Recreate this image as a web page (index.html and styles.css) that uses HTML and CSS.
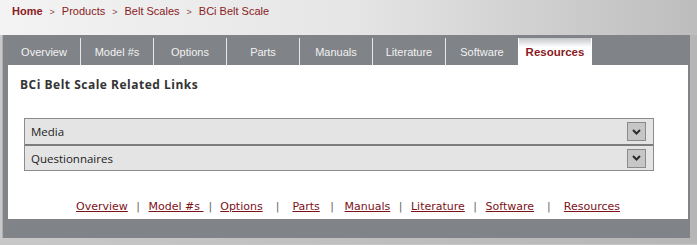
FILE: index.html
```html
<!DOCTYPE html>
<html lang="en">
<head>
<meta charset="UTF-8">
<meta name="viewport" content="width=device-width, initial-scale=1.0">
<title>BCi Belt Scale - Resources</title>
<link rel="stylesheet" href="styles.css">
</head>
<body>

<div class="header">
    <div class="breadcrumb">
        <a href="#" class="home">Home</a><span class="arrow">&gt;</span><a href="#">Products</a><span class="arrow">&gt;</span><a href="#">Belt Scales</a><span class="arrow">&gt;</span><a href="#">BCi Belt Scale</a>
    </div>
</div>

<div class="page">
    <div class="frame">
        <ul class="tabs">
            <li><a href="#">Overview</a></li>
            <li><a href="#">Model #s</a></li>
            <li><a href="#">Options</a></li>
            <li><a href="#">Parts</a></li>
            <li><a href="#">Manuals</a></li>
            <li><a href="#">Literature</a></li>
            <li><a href="#">Software</a></li>
            <li class="active"><a href="#">Resources</a></li>
        </ul>

        <div class="content">
            <h3 class="title">BCi Belt Scale Related Links</h3>

            <div class="accordion">
                <div class="acc-row">
                    <span>Media</span>
                    <button class="acc-btn"><svg width="9" height="6" viewBox="0 0 9 6"><polyline points="1,1 4.5,4.5 8,1" fill="none" stroke="#2b2b2b" stroke-width="2"/></svg></button>
                </div>
                <div class="acc-row second">
                    <span>Questionnaires</span>
                    <button class="acc-btn"><svg width="9" height="6" viewBox="0 0 9 6"><polyline points="1,1 4.5,4.5 8,1" fill="none" stroke="#2b2b2b" stroke-width="2"/></svg></button>
                </div>
            </div>

            <div class="footer-links">
                <a href="#">Overview</a><span class="sep">|</span><a href="#">Model #s&nbsp;</a><span class="sep narrow">|</span><a href="#">Options</a><span class="sep wide">|</span><a href="#">Parts</a><span class="sep mid">|</span><a href="#">Manuals</a><span class="sep">|</span><a href="#">Literature</a><span class="sep">|</span><a href="#">Software</a><span class="sep wide">|</span><a href="#">Resources</a>
            </div>
        </div>
    </div>
</div>

</body>
</html>
```

FILE: styles.css
```css
body {
    margin: 0;
    padding: 0;
    background-color: #c6c6c6;
    font-family: "Liberation Sans", Arial, sans-serif;
}
a {
    text-decoration: none;
}
.header {
    height: 35px;
    box-sizing: border-box;
    padding: 4px 0 0 12px;
    background: linear-gradient(to right, #f3f3f3 0%, #e6e6e6 50%, #bdbdbd 100%);
}
.breadcrumb {
    font-size: 11px;
    line-height: 14px;
}
.breadcrumb a {
    color: #8a1a22;
}
.breadcrumb .home {
    font-weight: bold;
}
.breadcrumb .arrow {
    font-size: 9px;
    color: #8a4a4e;
    margin: 0 7px;
}
.page {
    padding: 0 7px 6px 2px;
    background: linear-gradient(to right, #c8c8c8, #b6b6b6);
}
.frame {
    background-color: #808388;
    border-left: 1px solid #b0b0b0;
    padding: 3px 2px 19px 5px;
}
.tabs {
    list-style: none;
    margin: 0;
    padding: 0;
    display: flex;
    height: 27px;
}
.tabs li {
    width: 72px;
    border-left: 1px solid #e8e8e8;
    display: flex;
    align-items: center;
    justify-content: center;
    padding-top: 1px;
}
.tabs li:first-child {
    border-left: none;
}
.tabs li a {
    color: #f2f2f2;
    font-size: 11px;
}
.tabs li.active {
    background: linear-gradient(#c4c6c8 0px, #ffffff 9px);
    border-left: 1px solid #ffffff;
    border-right: 1px solid #ffffff;
}
.tabs li.active a {
    color: #8a1a22;
    font-weight: bold;
    font-size: 11.5px;
}
.content {
    background-color: #fff;
    padding: 13px 0 5px 0;
}
.title {
    margin: 0 0 0 12px;
    font-family: "Open Sans", sans-serif;
    font-size: 12px;
    letter-spacing: 0.5px;
    line-height: 14px;
    font-weight: bold;
    color: #333;
}
.accordion {
    margin: 26px 0 0 16px;
    width: 628px;
    border: 1px solid #8c8c8c;
    font-family: "Open Sans", sans-serif;
    font-size: 11.5px;
    color: #222;
}
.acc-row {
    height: 25px;
    background-color: #e4e4e4;
    display: flex;
    align-items: center;
    justify-content: space-between;
    padding: 0 7px 0 6px;
}
.acc-row.second {
    height: 24px;
    border-top: 2px solid #7c7c7c;
}
.acc-btn {
    width: 19px;
    height: 19px;
    padding: 0;
    background-color: #c6c6c6;
    border: 1px solid #8a8a8a;
    display: flex;
    align-items: center;
    justify-content: center;
}
.footer-links {
    margin-top: 29px;
    text-align: center;
    font-family: "DejaVu Sans", Verdana, sans-serif;
    font-size: 11px;
    line-height: 14px;
}
.footer-links a {
    color: #7b1218;
    text-decoration: underline;
}
.sep {
    color: #666;
    margin: 0 8.5px;
}
.sep.narrow {
    margin: 0 8px 0 5px;
}
.sep.mid {
    margin: 0 10.5px;
}
.sep.wide {
    margin: 0 13px;
}
```
